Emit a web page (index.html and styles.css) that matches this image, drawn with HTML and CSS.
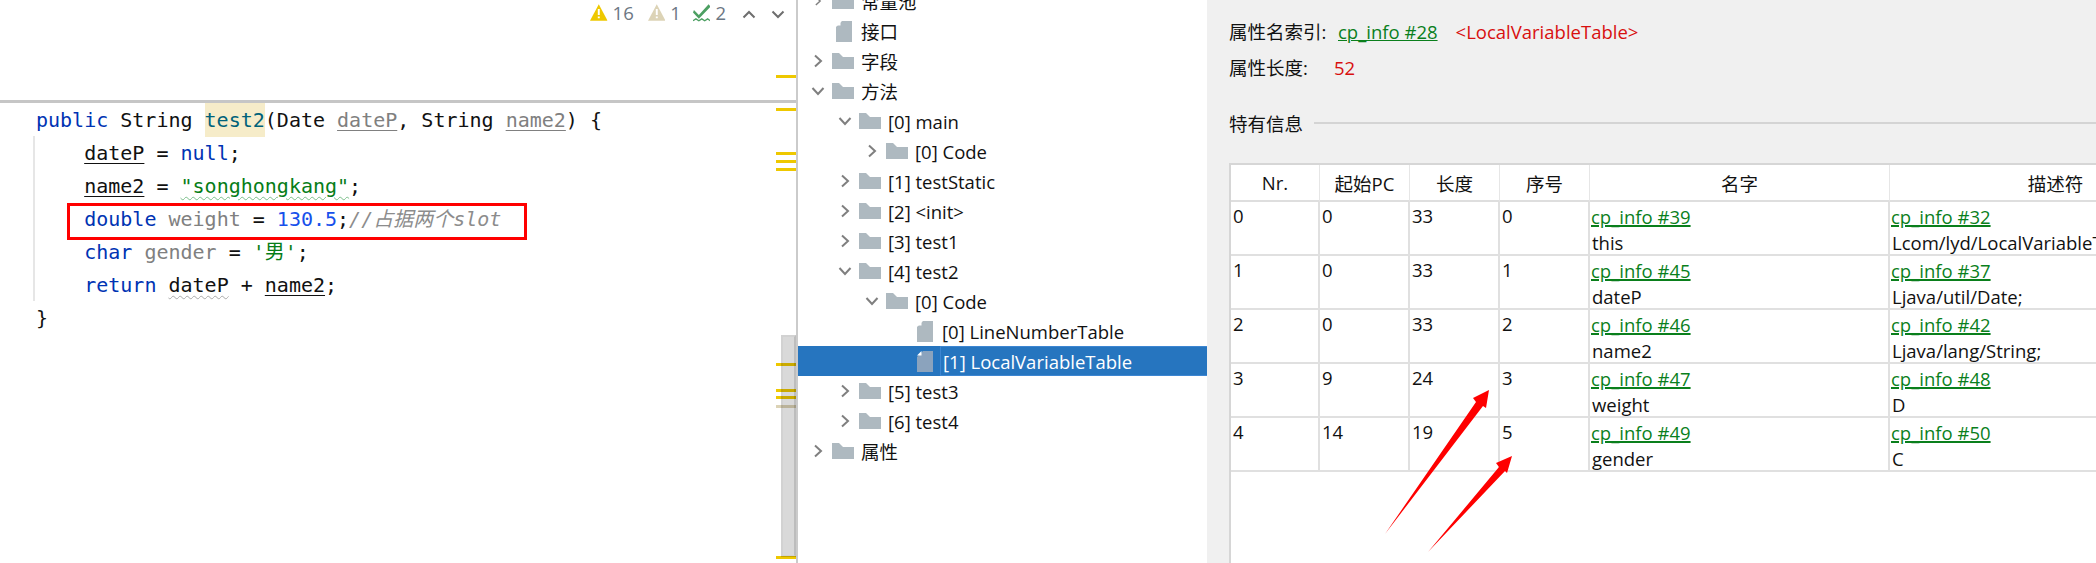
FILE: index.html
```html
<!DOCTYPE html>
<html lang="zh">
<head>
<meta charset="utf-8">
<title>jclasslib</title>
<link rel="stylesheet" href="styles.css">
</head>
<body>
<svg class="defs" width="0" height="0" aria-hidden="true">
  <symbol id="folder" viewBox="0 0 22 16"><path d="M0 0h7l4 4h11v12H0z"/></symbol>
  <symbol id="doc" viewBox="0 0 16 21"><path d="M6 0h10v21H0V6z"/><path class="fold" d="M0 4.500L4.500 0v4.500z"/></symbol>
  <symbol id="right" viewBox="0 0 10 14"><path d="M2 1.500L8 7l-6 5.500" fill="none" stroke="#7f7f7f" stroke-width="2"/></symbol>
  <symbol id="down" viewBox="0 0 14 10"><path d="M1.500 2L7 8l5.500-6" fill="none" stroke="#7f7f7f" stroke-width="2"/></symbol>
  <symbol id="warn" viewBox="0 0 18 17"><path d="M9 0l9 17H0z"/><path d="M8 5h2v6H8zM8 12.500h2v2H8z" fill="#fff"/></symbol>
</svg>

<main class="app">
  <section class="editor">
    <div class="status">
      <svg class="warn warn-a" width="18" height="17"><use href="#warn"/></svg><span class="count">16</span>
      <svg class="warn warn-b" width="18" height="17"><use href="#warn"/></svg><span class="count">1</span>
      <svg class="check" width="18" height="19" viewBox="0 0 18 19"><path d="M1 6l5 5L16 0l2 2.500L6 15 0 8.500z" fill="#4c9f62"/><path d="M0 17l3-2 3 2 3-2 3 2 3-2 3 2" fill="none" stroke="#4c9f62" stroke-width="1.300"/></svg><span class="count">2</span>
      <svg class="nav nav-up" width="14" height="9" viewBox="0 0 14 9"><path d="M1.500 7.500L7 2l5.500 5.500" fill="none" stroke="#6e6e6e" stroke-width="2"/></svg>
      <svg class="nav" width="14" height="9" viewBox="0 0 14 9"><path d="M1.500 1.500L7 7l5.500-5.500" fill="none" stroke="#6e6e6e" stroke-width="2"/></svg>
    </div>
    <div class="code-area">
      <div class="guide"></div>
      <pre class="code"><span class="k">public</span> String <span class="fn">test2</span>(Date <span class="p">dateP</span>, String <span class="p">name2</span>) {
    <span class="u">dateP</span> = <span class="k">null</span>;
    <span class="u">name2</span> = <span class="s wavy">"songhongkang"</span>;
    <span class="k">double</span> <span class="g">weight</span> = <span class="n">130.5</span>;<span class="c">//<span class="cjk">占据两个</span>slot</span>
    <span class="k">char</span> <span class="g">gender</span> = <span class="s">'<span class="cjk">男</span>'</span>;
    <span class="k">return</span> <span class="wavy-g">dateP</span> + <span class="u">name2</span>;
}</pre>
      <div class="redbox"></div>
    </div>
    <i class="mark m1"></i><i class="mark m2"></i><i class="mark m3"></i><i class="mark m4"></i><i class="mark m5"></i>
    <i class="mark m6"></i><i class="mark m7"></i><i class="mark m8"></i><i class="mark m9 pale"></i><i class="mark m10"></i>
    <div class="thumb"></div>
  </section>

  <nav class="tree">
    <div class="row d0"><svg class="tw tw-d" width="14" height="10"><use href="#right"/></svg><svg class="ic" width="22" height="16"><use href="#folder"/></svg><span class="text">常量池</span></div>
    <div class="row d0"><span class="tw"></span><svg class="ic doc" width="16" height="21"><use href="#doc"/></svg><span class="text">接口</span></div>
    <div class="row d0"><svg class="tw" width="10" height="14"><use href="#right"/></svg><svg class="ic" width="22" height="16"><use href="#folder"/></svg><span class="text">字段</span></div>
    <div class="row d0"><svg class="tw" width="14" height="10"><use href="#down"/></svg><svg class="ic" width="22" height="16"><use href="#folder"/></svg><span class="text">方法</span></div>
    <div class="row d1"><svg class="tw" width="14" height="10"><use href="#down"/></svg><svg class="ic" width="22" height="16"><use href="#folder"/></svg><span class="text">[0] main</span></div>
    <div class="row d2"><svg class="tw" width="10" height="14"><use href="#right"/></svg><svg class="ic" width="22" height="16"><use href="#folder"/></svg><span class="text">[0] Code</span></div>
    <div class="row d1"><svg class="tw" width="10" height="14"><use href="#right"/></svg><svg class="ic" width="22" height="16"><use href="#folder"/></svg><span class="text">[1] testStatic</span></div>
    <div class="row d1"><svg class="tw" width="10" height="14"><use href="#right"/></svg><svg class="ic" width="22" height="16"><use href="#folder"/></svg><span class="text">[2] &lt;init&gt;</span></div>
    <div class="row d1"><svg class="tw" width="10" height="14"><use href="#right"/></svg><svg class="ic" width="22" height="16"><use href="#folder"/></svg><span class="text">[3] test1</span></div>
    <div class="row d1"><svg class="tw" width="14" height="10"><use href="#down"/></svg><svg class="ic" width="22" height="16"><use href="#folder"/></svg><span class="text">[4] test2</span></div>
    <div class="row d2"><svg class="tw" width="14" height="10"><use href="#down"/></svg><svg class="ic" width="22" height="16"><use href="#folder"/></svg><span class="text">[0] Code</span></div>
    <div class="row d3"><span class="tw"></span><svg class="ic doc" width="16" height="21"><use href="#doc"/></svg><span class="text">[0] LineNumberTable</span></div>
    <div class="row d3 selected"><span class="tw"></span><svg class="ic doc" width="16" height="21"><use href="#doc"/></svg><span class="label">[1] LocalVariableTable</span></div>
    <div class="row d1"><svg class="tw" width="10" height="14"><use href="#right"/></svg><svg class="ic" width="22" height="16"><use href="#folder"/></svg><span class="text">[5] test3</span></div>
    <div class="row d1"><svg class="tw" width="10" height="14"><use href="#right"/></svg><svg class="ic" width="22" height="16"><use href="#folder"/></svg><span class="text">[6] test4</span></div>
    <div class="row d0"><svg class="tw" width="10" height="14"><use href="#right"/></svg><svg class="ic" width="22" height="16"><use href="#folder"/></svg><span class="text">属性</span></div>
  </nav>

  <section class="details">
    <div class="info"><span class="key key-a">属性名索引:</span><a class="link">cp_info #28</a><span class="red red-a">&lt;LocalVariableTable&gt;</span></div>
    <div class="info info-b"><span class="key key-b">属性长度:</span><span class="red">52</span></div>
    <div class="legend"><span>特有信息</span><hr></div>
    <div class="table-wrap">
      <table>
        <colgroup><col class="c1"><col class="c2"><col class="c2"><col class="c2"><col class="c5"><col class="c6"></colgroup>
        <thead><tr><th>Nr.</th><th>起始PC</th><th>长度</th><th>序号</th><th>名字</th><th>描述符</th></tr></thead>
        <tbody>
          <tr><td>0</td><td>0</td><td>33</td><td>0</td><td><a>cp_info #39</a>this</td><td><a>cp_info #32</a>Lcom/lyd/LocalVariableTest;</td></tr>
          <tr><td>1</td><td>0</td><td>33</td><td>1</td><td><a>cp_info #45</a>dateP</td><td><a>cp_info #37</a>Ljava/util/Date;</td></tr>
          <tr><td>2</td><td>0</td><td>33</td><td>2</td><td><a>cp_info #46</a>name2</td><td><a>cp_info #42</a>Ljava/lang/String;</td></tr>
          <tr><td>3</td><td>9</td><td>24</td><td>3</td><td><a>cp_info #47</a>weight</td><td><a>cp_info #48</a>D</td></tr>
          <tr><td>4</td><td>14</td><td>19</td><td>5</td><td><a>cp_info #49</a>gender</td><td><a>cp_info #50</a>C</td></tr>
        </tbody>
      </table>
    </div>
  </section>

  <svg class="arrows" width="2096" height="563" viewBox="0 0 2096 563" aria-hidden="true">
    <path d="M1385 534L1476 402 1473 398 1489 390 1486 408 1483 406z" fill="#fe0000"/>
    <path d="M1428 552L1499 467 1496 463 1512 456 1507 473 1505 471z" fill="#fe0000"/>
  </svg>
</main>
</body>
</html>
```
FILE: styles.css
```css
* { box-sizing: border-box; }
html, body { margin: 0; height: 100%; overflow: hidden; background: #fff; }
.defs { position: absolute; }

.app {
  position: relative;
  display: flex;
  width: 2096px;
  height: 563px;
  overflow: hidden;
  font-family: "Open Sans", "Noto Sans CJK SC", sans-serif;
  font-size: 18.5px;
  color: #111;
}

/* editor */
.editor {
  position: relative;
  flex: 0 0 798px;
  min-width: 0;
  border-right: 2px solid #cbcbcb;
}
.status {
  height: 103px;
  border-bottom: 3px solid #c6c6c6;
  display: flex;
  align-items: flex-start;
  padding: 4px 11px 0 590px;
}
.warn-a { fill: #eec800; }
.warn-b { fill: #dcd3b6; margin-left: 14px; }
.check { margin-left: 12px; }
.count {
  margin-left: 5px;
  line-height: 18px;
  color: #6d7784;
}
.nav { margin-top: 6px; margin-left: 15px; flex: none; }
.nav-up { margin-left: 16px; }
.code-area { position: relative; height: 460px; }
.guide {
  position: absolute;
  left: 33px;
  top: 33px;
  width: 2px;
  height: 165px;
  background: #e6e6e6;
}
.code {
  margin: 0;
  padding: 1px 0 0 36px;
  font-family: "DejaVu Sans Mono", "Noto Sans CJK SC", monospace;
  font-size: 20px;
  line-height: 33px;
  color: #111;
}
.k { color: #0033b3; }
.n { color: #1750eb; }
.s { color: #067d17; }
.g { color: #808080; }
.c { color: #8c8c8c; font-style: italic; }
.cjk {
  font-family: "Noto Sans CJK SC", sans-serif;
  font-size: 20px;
  line-height: 1;
}
.fn { background: #f6ecc9; color: #00627a; display: inline-block; box-shadow: 0 -1px 0 #f6ecc9; }
.p { color: #808080; text-decoration: underline; text-underline-offset: 3px; text-decoration-thickness: 1px; }
.u { text-decoration: underline; text-underline-offset: 3px; text-decoration-thickness: 1px; }
.wavy { text-decoration: underline wavy #7cbf8b 1px; text-underline-offset: 3px; }
.wavy-g { text-decoration: underline wavy #a9a9a9 1px; text-underline-offset: 3px; }
.redbox {
  position: absolute;
  left: 67px;
  top: 100px;
  width: 460px;
  height: 37px;
  border: 3px solid #f00;
}

.mark {
  position: absolute;
  right: 0;
  width: 20px;
  height: 3px;
  background: #eec800;
}
.m1 { top: 75px; }
.m2 { top: 108px; }
.m3 { top: 152px; }
.m4 { top: 160px; }
.m5 { top: 168px; }
.m6 { top: 363px; }
.m7 { top: 389px; }
.m8 { top: 396px; }
.m9 { top: 405px; }
.m10 { top: 556px; }
.pale { background: #dcd3b6; }
.thumb {
  position: absolute;
  right: 0;
  top: 335px;
  width: 15px;
  height: 222px;
  background: rgba(0, 0, 0, 0.15);
  border: 2px solid rgba(0, 0, 0, 0.03);
  border-right-color: rgba(0, 0, 0, 0.12);
}

/* tree */
.tree {
  flex: 0 0 409px;
  margin-top: -14px;
  line-height: 30px;
}
.row {
  display: flex;
  align-items: center;
  height: 30px;
  white-space: nowrap;
}
.text { margin-top: 2px; }
.d0 { padding-left: 13px; }
.d1 { padding-left: 40px; }
.d2 { padding-left: 67px; }
.d3 { padding-left: 94px; }
.tw { flex: none; margin-right: 7px; margin-left: 0; }
svg.tw[width="10"] { margin-left: 2px; margin-right: 9px; }
span.tw { width: 14px; }
.ic { flex: none; fill: #aeb9c0; margin-right: 7px; }
.doc { margin-left: 4px; margin-right: 9px; }
.fold { fill: #fff; }
.selected { background: #2675bf; color: #fff; }
.selected .ic { fill: #8ba3bd; }
.selected .label {
  flex: 1;
  margin-left: -2px;
  padding-left: 2px;
  height: 30px;
  border: 1px solid #3d86d2;
  border-width: 1px 0 1px 1px;
  line-height: 29px;
}

/* details */
.details {
  flex: 1;
  min-width: 0;
  background: #f0f0f0;
  padding: 16px 0 0 22px;
}
.info { display: flex; height: 32px; line-height: 32px; white-space: nowrap; }
.info-b { margin-top: 4px; }
.key-a { width: 109px; }
.key-b { width: 105px; }
.link, td a { color: #0a7f1c; text-decoration: underline; }
.link { text-decoration-thickness: 1px; }
.red { color: #d80f0f; }
.red-a { margin-left: 18px; }
.legend {
  display: flex;
  align-items: center;
  margin-top: 23px;
  height: 32px;
}
.legend hr {
  flex: 1;
  margin: 0 0 0 11px;
  border: 0;
  height: 2px;
  background: #d4d4d4;
}
.table-wrap {
  margin-top: 24px;
  height: 420px;
  background: #fff;
  border: solid #d6d6d6;
  border-width: 2px 0 0 2px;
  overflow: hidden;
}
table {
  table-layout: fixed;
  width: 991px;
  border-collapse: separate;
  border-spacing: 0;
}
.c1 { width: 89px; }
.c2 { width: 90px; }
.c5 { width: 300px; }
.c6 { width: 332px; }
th {
  height: 37px;
  padding: 0;
  font-weight: 400;
  border-bottom: 2px solid #dedede;
  border-right: 1px solid #e6e6e6;
}
td {
  height: 54px;
  padding: 0 0 0 2px;
  vertical-align: top;
  line-height: 27px;
  border-right: 2px solid #e0e0e0;
  border-bottom: 2px solid #e0e0e0;
  white-space: nowrap;
  overflow: hidden;
}
td:nth-child(n+5) { line-height: 23px; }
td a {
  display: block;
  width: fit-content;
  margin-left: -1px;
  line-height: 29px;
  text-decoration-thickness: 2px;
  text-underline-offset: 1px;
}

.arrows { position: absolute; left: 0; top: 0; pointer-events: none; }
```
